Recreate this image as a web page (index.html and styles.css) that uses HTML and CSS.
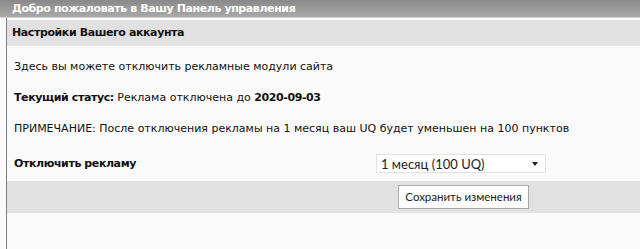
FILE: index.html
```html
<!DOCTYPE html>
<html lang="ru">
<head>
	<meta charset="UTF-8">
	<title>Панель управления</title>
	<link rel="stylesheet" href="styles.css">
</head>
<body>
	<div class="panel">
		<div class="panel-hd">Добро пожаловать в Вашу Панель управления</div>
		<div class="panel-bd">
			<div class="section-hd">Настройки Вашего аккаунта</div>
			<div class="section-bd">
				<p class="line">Здесь вы можете отключить рекламные модули сайта</p>
				<p class="line"><b>Текущий статус:</b> Реклама отключена до <b>2020-09-03</b></p>
				<p class="line">ПРИМЕЧАНИЕ: После отключения рекламы на 1 месяц ваш UQ будет уменьшен на 100 пунктов</p>
				<div class="form-row">
					<label class="form-label">Отключить рекламу</label>
					<div class="select">
						<span>1 месяц (100 UQ)</span>
						<span class="select-arrow"></span>
					</div>
				</div>
			</div>
			<div class="form-actions">
				<button class="btn">Сохранить изменения</button>
			</div>
		</div>
	</div>
</body>
</html>
```

FILE: styles.css
```css
*{box-sizing: border-box;}
html,body{margin:0;padding:0;background:#fafafa;}
body{font-family: "DejaVu Sans", Verdana, sans-serif;font-size: 11px;color:#111;}
p{margin:0;}
b{letter-spacing: -0.4px;}
.panel{
	height: 249px;
	background:#fafafa;
}
.panel-hd{
	height: 18px;
	line-height: 18px;
	padding-left: 12px;
	color:#fff;
	font-weight: bold;
	letter-spacing: -0.4px;
	background: linear-gradient(#898989, #a9a9a9);
	border-bottom: 1px solid #d6d6d6;
}
.panel-bd{
	margin-left: 6px;
	border-left: 1px solid #6f8092;
	height: 231px;
	padding-top: 2px;
	background:#fafafa;
}
.section-hd{
	height: 26px;
	line-height: 26px;
	padding-left: 5px;
	background:#e1e1e1;
	border-bottom: 1px solid #e6e6e6;
	font-weight: bold;
	letter-spacing: -0.4px;
}
.section-bd{
	padding: 13px 0 8px 7px;
}
.line{
	height: 31px;
	line-height: 16px;
}
.form-row{
	display: flex;
	align-items: center;
	height: 20px;
	margin-top: 1px;
}
.form-label{
	font-weight: bold;
	letter-spacing: -0.4px;
	width: 362px;
}
.select{
	width: 170px;
	height: 19px;
	margin-top: 1px;
	background:#fff;
	border:1px solid #e2e2e2;
	display: flex;
	align-items: center;
	justify-content: space-between;
	padding: 0 7px 0 4px;
	font-family: Lato, "Open Sans", sans-serif;
	font-size: 13px;
	color:#222;
}
.select-arrow{
	width: 0;
	height: 0;
	border-left: 3.5px solid transparent;
	border-right: 3.5px solid transparent;
	border-top: 4px solid #222;
}
.form-actions{
	background:#e1e1e1;
	height: 32px;
	display: flex;
	align-items: center;
	padding-left: 391px;
}
.btn{
	width: 131px;
	height: 24px;
	margin-top: -1px;
	background:#fff;
	border:1px solid #a9a9a9;
	border-radius: 0;
	font-family: Lato, "Open Sans", sans-serif;
	font-size: 11.5px;
	color:#222;
	padding: 0;
}
```
